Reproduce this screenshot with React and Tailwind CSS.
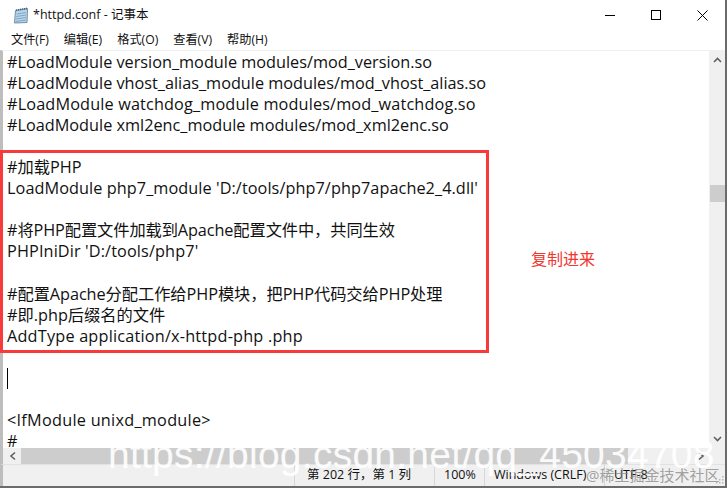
const sans = "font-['Open_Sans','Noto_Sans_CJK_SC',sans-serif]";

function NotepadIcon() {
  return (
    <svg width="16" height="17" viewBox="0 0 16 17" className="shrink-0">
      <path d="M2.5 3.5 L14.5 1.5 L14 15.5 L1.5 16 Z" fill="#b9d5ea" stroke="#6f8fa8" strokeWidth="1" />
      <path d="M3.5 7 L13 5.5 M3.2 9.5 L13 8 M3 12 L13 10.5 M2.8 14.5 L13 13" stroke="#7fa6c4" strokeWidth="1" />
      <path d="M3 3.3 L14 1.5" stroke="#4c6a80" strokeWidth="1.8" strokeDasharray="1.2 0.8" />
    </svg>
  );
}

const menus = ["文件(F)", "编辑(E)", "格式(O)", "查看(V)", "帮助(H)"];

const lines = [
  ["#LoadModule version_module modules/mod_version.so", ""],
  ["#LoadModule vhost_alias_module modules/mod_vhost_alias.so", ""],
  ["#LoadModule watchdog_module modules/mod_watchdog.so", "tracking-[0.14px]"],
  ["#LoadModule xml2enc_module modules/mod_xml2enc.so", ""],
  ["", ""],
  ["#加载PHP", ""],
  ["LoadModule php7_module 'D:/tools/php7/php7apache2_4.dll'", "tracking-[0.07px]"],
  ["", ""],
  ["#将PHP配置文件加载到Apache配置文件中，共同生效", "tracking-[-0.1px]"],
  ["PHPIniDir 'D:/tools/php7'", "tracking-[0.12px]"],
  ["", ""],
  ["#配置Apache分配工作给PHP模块，把PHP代码交给PHP处理", "tracking-[-0.06px]"],
  ["#即.php后缀名的文件", ""],
  ["AddType application/x-httpd-php .php", "tracking-[0.2px]"],
  ["", ""],
  ["CURSOR", ""],
  ["", ""],
  ["<IfModule unixd_module>", "tracking-[0.26px]"],
  ["#", ""],
];

export default function App() {
  return (
    <div className={`relative w-[727px] h-[488px] overflow-hidden bg-white ${sans}`}>
      <div className="flex flex-col w-[727px] h-[488px] border-r-2 border-b-2 border-[#6b6b6b]">
        <div className="flex items-center h-[30px] pl-[13px] shrink-0">
          <NotepadIcon />
          <span className="ml-[4px] text-[12.5px] text-[#111]">*httpd.conf - 记事本</span>
          <div className="ml-auto flex items-center h-full">
            <div className="w-[46px] h-full flex items-center justify-center">
              <div className="w-[10px] h-px bg-black" />
            </div>
            <div className="w-[46px] h-full flex items-center justify-center">
              <div className="w-[10px] h-[10px] border border-black" />
            </div>
            <div className="w-[46px] h-full flex items-center justify-center">
              <svg width="11" height="11" viewBox="0 0 11 11"><path d="M0.5 0.5 L10.5 10.5 M10.5 0.5 L0.5 10.5" stroke="#000" strokeWidth="1" /></svg>
            </div>
          </div>
        </div>

        <div className="flex items-center h-[20px] pl-[11px] gap-[15px] shrink-0 text-[12.2px] text-[#111]">
          {menus.map((m) => (
            <span key={m}>{m}</span>
          ))}
        </div>

        <div className="flex flex-1 min-h-0 border-t border-[#f0f0f0] border-l-[3px] border-l-[#bdbdbd]">
          <div className="flex-1 min-w-0 pt-[1px] pl-[4px] overflow-hidden text-[16.25px] leading-[21.06px] text-[#111] whitespace-pre">
            {lines.map(([l, cls], i) =>
              l === "CURSOR" ? (
                <div key={i} className="h-[21.06px] flex items-center">
                  <div className="w-px h-[21px] bg-black" />
                </div>
              ) : (
                <div key={i} className={`h-[21.06px] ${cls}`}>{l || " "}</div>
              )
            )}
          </div>
          <div className="w-[16px] shrink-0 bg-[#f0f0f0] flex flex-col items-center">
            <svg width="9" height="6" viewBox="0 0 9 6" className="mt-[6px]"><path d="M1 5 L4.5 1.5 L8 5" fill="none" stroke="#606060" strokeWidth="1.6" /></svg>
            <div className="w-[15px] h-[17px] mt-[122px] bg-[#cdcdcd]" />
            <svg width="9" height="6" viewBox="0 0 9 6" className="mt-auto mb-[6px]"><path d="M1 1 L4.5 4.5 L8 1" fill="none" stroke="#606060" strokeWidth="1.6" /></svg>
          </div>
        </div>

        <div className="flex items-center h-[16px] shrink-0 bg-[#f0f0f0] border-l-[3px] border-l-[#bdbdbd]">
          <svg width="18" height="10" viewBox="0 0 18 10" className="shrink-0"><path d="M12 1.5 L8 5 L12 8.5" fill="none" stroke="#606060" strokeWidth="1.6" /></svg>
          <div className="w-[607px] h-full bg-[#cdcdcd]" />
          <svg width="17" height="10" viewBox="0 0 17 10" className="ml-auto mr-[16px] shrink-0"><path d="M7 1.5 L11 5 L7 8.5" fill="none" stroke="#606060" strokeWidth="1.6" /></svg>
        </div>

        <div className="flex items-center h-[22px] shrink-0 bg-[#f0f0f0] border-t border-t-[#e2e2e2] border-l-[3px] border-l-[#bdbdbd] text-[12.5px] text-[#111]">
          <div className="w-[291px] shrink-0" />
          <div className="w-[140px] shrink-0 h-full flex items-center border-l border-[#d7d7d7] pl-[12px]">第 202 行，第 1 列</div>
          <div className="w-[50px] shrink-0 h-full flex items-center border-l border-[#d7d7d7] pl-[9px]">100%</div>
          <div className="w-[120px] shrink-0 h-full flex items-center border-l border-[#d7d7d7] pl-[9px]">Windows (CRLF)</div>
          <div className="flex-1 h-full flex items-center border-l border-[#d7d7d7] pl-[9px]">UTF-8</div>
        </div>
      </div>

      <div className="absolute left-0 top-[150px] w-[489px] h-[203px] border-[3px] border-[#f83a3a]" />
      <span className="absolute left-[531px] top-[248px] text-[16px] leading-[22px] text-[#f0362e]">复制进来</span>
      <span className="absolute left-[108px] top-[430px] text-[39px] leading-[50px] tracking-[0.25px] text-white/90 font-['Liberation_Sans',sans-serif] whitespace-nowrap">https://blog.csdn.net/qq_45034708</span>
      <span className="absolute left-[586px] top-[465px] text-[15px] leading-[20px] text-[#8a8a8a]/80 whitespace-nowrap">@稀土掘金技术社区</span>
      <svg width="10" height="10" viewBox="0 0 10 10" className="absolute left-[715px] top-[475px]">
        <path d="M7 1h1.5v1.5H7zM4 4h1.5v1.5H4zM7 4h1.5v1.5H7zM1 7h1.5v1.5H1zM4 7h1.5v1.5H4zM7 7h1.5v1.5H7z" fill="#b5b5b5" />
      </svg>
    </div>
  );
}
